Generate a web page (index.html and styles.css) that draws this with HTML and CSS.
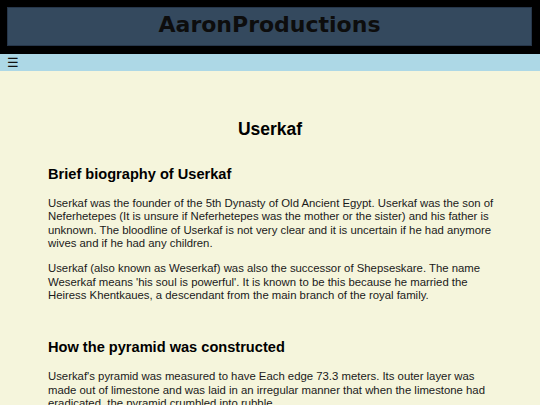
FILE: index.html
```html
<!DOCTYPE html>
<html lang="en">
<head>
<meta charset="utf-8">
<title>Userkaf</title>
<link rel="stylesheet" href="styles.css">
</head>
<body>
<header class="site-header">
  <div class="brand-box"><span class="brand">AaronProductions</span></div>
</header>
<nav class="nav-bar"><span class="menu-icon">☰</span></nav>
<main class="content">
  <h1 class="page-title">Userkaf</h1>
  <section class="section">
    <h2 class="section-title">Brief biography of Userkaf</h2>
    <p class="text">Userkaf was the founder of the 5th Dynasty of Old Ancient Egypt. Userkaf was the son of Neferhetepes (It is unsure if Neferhetepes was the mother or the sister) and his father is unknown. The bloodline of Userkaf is not very clear and it is uncertain if he had anymore wives and if he had any children.</p>
    <p class="text">Userkaf (also known as Weserkaf) was also the successor of Shepseskare. The name Weserkaf means 'his soul is powerful'. It is known to be this because he married the Heiress Khentkaues, a descendant from the main branch of the royal family.</p>
  </section>
  <section class="section">
    <h2 class="section-title">How the pyramid was constructed</h2>
    <p class="text">Userkaf's pyramid was measured to have Each edge 73.3 meters. Its outer layer was made out of limestone and was laid in an irregular manner that when the limestone had eradicated, the pyramid crumbled into rubble.</p>
  </section>
</main>
</body>
</html>
```

FILE: styles.css
```css
html, body {
  margin: 0;
  padding: 0;
}
body {
  background: #f5f5dc;
  font-family: "Liberation Sans", Arial, sans-serif;
  color: #1a1a1a;
}
.site-header {
  background: #000;
  padding: 7px 8px 8px 7px;
}
.brand-box {
  background: #34495e;
  border: 1px solid #26364a;
  height: 33px;
  padding-bottom: 4px;
  display: flex;
  align-items: center;
  justify-content: center;
}
.brand {
  font-family: "DejaVu Sans", sans-serif;
  font-weight: bold;
  font-size: 22px;
  color: #0d0d0d;
}
.nav-bar {
  background: #add8e6;
  height: 17px;
  padding-left: 7px;
  display: flex;
  align-items: center;
}
.menu-icon {
  font-family: "DejaVu Sans", sans-serif;
  font-size: 13px;
  line-height: 17px;
  color: #111;
}
.content {
  padding: 48px 48px 0 48px;
}
.page-title {
  margin: 0 0 27px 0;
  font-size: 17.5px;
  line-height: 20px;
  text-align: center;
  color: #000;
}
.section {
  margin-bottom: 37px;
}
.section-title {
  margin: 0 0 14px 0;
  font-size: 14.6px;
  line-height: 17px;
  color: #000;
}
.text {
  margin: 0 -4px 12px 0;
  font-size: 11.35px;
  line-height: 13.35px;
}
.section .text:last-child {
  margin-bottom: 0;
}
```
